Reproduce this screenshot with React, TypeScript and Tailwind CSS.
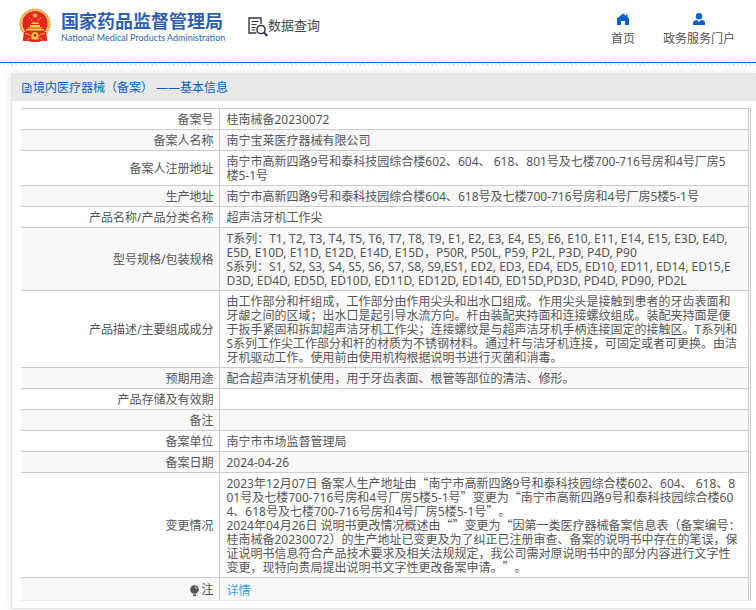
import React from 'react';

type Row = {
    label: string;
    lines: string[];
};

const rows: Row[] = [
    { label: '备案号', lines: ['桂南械备20230072'] },
    { label: '备案人名称', lines: ['南宁宝莱医疗器械有限公司'] },
    {
        label: '备案人注册地址',
        lines: ['南宁市高新四路9号和泰科技园综合楼602、604、 618、801号及七楼700-716号房和4号厂房5', '楼5-1号'],
    },
    { label: '生产地址', lines: ['南宁市高新四路9号和泰科技园综合楼604、618号及七楼700-716号房和4号厂房5楼5-1号'] },
    { label: '产品名称/产品分类名称', lines: ['超声洁牙机工作尖'] },
    {
        label: '型号规格/包装规格',
        lines: [
            'T系列：T1, T2, T3, T4, T5, T6, T7, T8, T9, E1, E2, E3, E4, E5, E6, E10, E11, E14, E15, E3D, E4D,',
            'E5D, E10D, E11D, E12D, E14D, E15D，P50R, P50L, P59, P2L, P3D, P4D, P90',
            'S系列：S1, S2, S3, S4, S5, S6, S7, S8, S9,ES1, ED2, ED3, ED4, ED5, ED10, ED11, ED14, ED15,E',
            'D3D, ED4D, ED5D, ED10D, ED11D, ED12D, ED14D, ED15D,PD3D, PD4D, PD90, PD2L',
        ],
    },
    {
        label: '产品描述/主要组成成分',
        lines: [
            '由工作部分和杆组成，工作部分由作用尖头和出水口组成。作用尖头是接触到患者的牙齿表面和',
            '牙龈之间的区域；出水口是起引导水流方向。杆由装配夹持面和连接螺纹组成。装配夹持面是便',
            '于扳手紧固和拆卸超声洁牙机工作尖；连接螺纹是与超声洁牙机手柄连接固定的接触区。T系列和',
            'S系列工作尖工作部分和杆的材质为不锈钢材料。通过杆与洁牙机连接，可固定或者可更换。由洁',
            '牙机驱动工作。使用前由使用机构根据说明书进行灭菌和消毒。',
        ],
    },
    { label: '预期用途', lines: ['配合超声洁牙机使用，用于牙齿表面、根管等部位的清洁、修形。'] },
    { label: '产品存储及有效期', lines: [] },
    { label: '备注', lines: [] },
    { label: '备案单位', lines: ['南宁市市场监督管理局'] },
    { label: '备案日期', lines: ['2024-04-26'] },
    {
        label: '变更情况',
        lines: [
            '2023年12月07日 备案人生产地址由“南宁市高新四路9号和泰科技园综合楼602、604、 618、8',
            '01号及七楼700-716号房和4号厂房5楼5-1号”变更为“南宁市高新四路9号和泰科技园综合楼60',
            '4、618号及七楼700-716号房和4号厂房5楼5-1号”。',
            '2024年04月26日 说明书更改情况概述由“”变更为“因第一类医疗器械备案信息表（备案编号：',
            '桂南械备20230072）的生产地址已变更及为了纠正已注册审查、备案的说明书中存在的笔误，保',
            '证说明书信息符合产品技术要求及相关法规规定，我公司需对原说明书中的部分内容进行文字性',
            '变更，现特向贵局提出说明书文字性更改备案申请。”。',
        ],
    },
];

// Curly quotes take the full-width glyphs of the Chinese font
function Line({ text }: { text: string }) {
    return (
        <div className="whitespace-nowrap">
            {text.split(/([“”])/).map((part, i) =>
                part === '“' || part === '”' ? (
                    <span key={i} className="font-['Noto_Sans_CJK_SC',sans-serif] leading-none">{part}</span>
                ) : (
                    part
                )
            )}
        </div>
    );
}

function Emblem() {
    return (
        <svg viewBox="0 0 32 34" className="h-[34px] w-8" aria-hidden="true">
            <path d="M5 25l-1 8h24l-1-8z" fill="#dd2a1c" />
            <circle cx="16" cy="16" r="15.6" fill="#f3cf7c" />
            <circle cx="16" cy="16" r="14.4" fill="none" stroke="#e39a3c" strokeWidth="1.6" strokeDasharray="1.6 1.2" />
            <circle cx="16" cy="15.500" r="12.6" fill="#e8251c" />
            <path d="M16 4.600l.9 2h2.100l-1.700 1.300.7 2.100-2-1.300-2 1.300.7-2.100L13 6.600h2.100z" fill="#fbc84c" />
            <g fill="#f7b03c">
                <circle cx="10.500" cy="10" r=".8" />
                <circle cx="12.500" cy="12" r=".8" />
                <circle cx="21.500" cy="10" r=".8" />
                <circle cx="19.500" cy="12" r=".8" />
            </g>
            <path d="M12 16l1-1.500h6l1 1.500zM11 17h10v2H11zM7 21h18v1.500H7zM9 19.500h14v1H9z" fill="#fbd44c" />
            <path d="M5 24h22l1 9h-7l-2-4h-6l-2 4H4z" fill="#dd2a1c" />
            <circle cx="16" cy="27.500" r="3.600" fill="#f5c044" />
            <circle cx="16" cy="27.500" r="1.400" fill="#e2231c" />
            <path d="M6 25.500q5 0 6.500 3M26 25.500q-5 0-6.500 3M8 32.500l3-3M24 32.500l-3-3" stroke="#f5b044" strokeWidth="1" fill="none" />
            <path d="M10 34q6-4 12 0z" fill="#dd2a1c" />
        </svg>
    );
}

function SearchDocIcon() {
    return (
        <svg viewBox="0 0 20 20" className="size-5" fill="none" stroke="#37364c" aria-hidden="true">
            <path d="M8.500 16H1V1h12v6" strokeWidth="1.400" />
            <path d="M3.500 4.500h7M3.500 7.500h5M3.500 10.500h4M3.500 13h4" strokeWidth="1" />
            <circle cx="13" cy="12.500" r="4.100" strokeWidth="1.500" />
            <path d="M16 15.500l3.300 3.500" strokeWidth="2.200" />
        </svg>
    );
}

function Header() {
    return (
        <>
            <header className="flex h-[63px] items-start border-b border-[#0062c4] bg-white pr-[21px] pl-[19px]">
                <a href="#" className="mt-2 flex items-start">
                    <Emblem />
                    <span className="ml-[10px] flex w-[161px] flex-col whitespace-nowrap text-[#2f5fb3]">
                        <span className="mt-[3px] text-[18px] leading-[20px] font-bold">国家药品监督管理局</span>
                        <span className="font-['Lato',sans-serif] text-[9px] leading-[14px]">
                            National Medical Products Administration
                        </span>
                    </span>
                </a>
                <div className="mt-[17px] ml-[26px] flex items-start text-[#444]">
                    <SearchDocIcon />
                    <span className="text-[13px] leading-[16px]">数据查询</span>
                </div>
                <nav className="ml-auto flex gap-7 pt-[13px] text-[12px] leading-[16px] text-[#555]">
                    <a href="#" className="flex flex-col items-center gap-[6px]">
                        <svg viewBox="0 0 12 12" className="size-3" fill="#0a60c8" aria-hidden="true">
                            <path d="M6 .5L0 5.500V12h4V8h4v4h4V5.500L10.500 4V1.500H9v1.300z" />
                        </svg>
                        首页
                    </a>
                    <a href="#" className="flex flex-col items-center gap-[6px]">
                        <svg viewBox="0 0 12 12" className="size-3" fill="#0a60c8" aria-hidden="true">
                            <circle cx="6" cy="3.200" r="3.200" />
                            <path d="M0 12V9.700Q0 7.500 3.800 7L6 9l2.200-2Q12 7.500 12 9.700V12z" />
                        </svg>
                        政务服务门户
                    </a>
                </nav>
            </header>
            <div className="h-[3px] bg-[repeating-linear-gradient(45deg,#e4e4e4_0px,#e4e4e4_1px,#fff_1px,#fff_3px)]" />
        </>
    );
}

export default function App() {
    return (
        <div className="overflow-hidden bg-white font-['Noto_Sans','Noto_Sans_CJK_SC',sans-serif] text-[#555] [text-spacing-trim:space-all]">
            <Header />
            <main className="pt-[7px] pb-[1px] pl-[11px]">
                <section className="border-b border-l border-[#e4e4e4] pb-[7px] shadow-[0_0_8px_rgba(0,0,0,0.1)]">
                    <h1 className="flex h-7 items-center bg-[#e8e8e8] pt-[2px] pl-[10px] text-[12px] leading-[16px] text-[#0a60c8]">
                        <svg viewBox="0 0 11 12" className="mr-px h-3 w-[10px]" fill="none" stroke="#0a60c8" strokeWidth="1" aria-hidden="true">
                            <path d="M1 1h6l3 3v7H1zM7 1v3h3M3 5.500h5M3 7.500h5M3 9.500h5" />
                        </svg>
                        境内医疗器械（备案） ——基本信息
                    </h1>
                    <div className="mt-[7px] mr-[5px] ml-[9px] border-r border-[#ccc] pr-[1px]">
                        <table className="w-full table-fixed border-collapse border-r border-b border-r-[#ccc] border-b-[#e8e8f2] text-[12px] leading-[14px]">
                            <colgroup>
                                <col className="w-[198px]" />
                                <col />
                            </colgroup>
                            <tbody>
                                {rows.map(({ label, lines }) => (
                                    <tr key={label} className="h-[21px] border-t border-[#ccc] even:bg-[#f8f8f8]">
                                        <th scope="row" className="border-r border-[#ccc] pt-1 pr-[5px] pb-[2px] text-right font-normal">
                                            {label}
                                        </th>
                                        <td className="pt-1 pb-[2px] pl-[7px]">
                                            {lines.map((line) => <Line key={line} text={line} />)}
                                        </td>
                                    </tr>
                                ))}
                                <tr className="h-[23px] border-t border-[#ccc] bg-[#f8f8f8]">
                                    <th scope="row" className="border-r border-[#ccc] pt-[2px] pr-[5px] font-normal">
                                        <span className="flex items-center justify-end gap-[2px]">
                                            <svg viewBox="0 0 9 11" className="h-[11px] w-[9px]" aria-hidden="true">
                                                <circle cx="4.500" cy="4.500" r="4.300" fill="#555" />
                                                <path d="M3 9.300h3V11H3z" fill="#555" />
                                                <path d="M4.800 2q1.800.2 2 2" stroke="#f8f8f8" strokeWidth=".9" fill="none" />
                                            </svg>
                                            注
                                        </span>
                                    </th>
                                    <td className="pt-1 pl-[7px]">
                                        <a href="#" className="text-[#409eff]">详情</a>
                                    </td>
                                </tr>
                            </tbody>
                        </table>
                    </div>
                </section>
            </main>
        </div>
    );
}
